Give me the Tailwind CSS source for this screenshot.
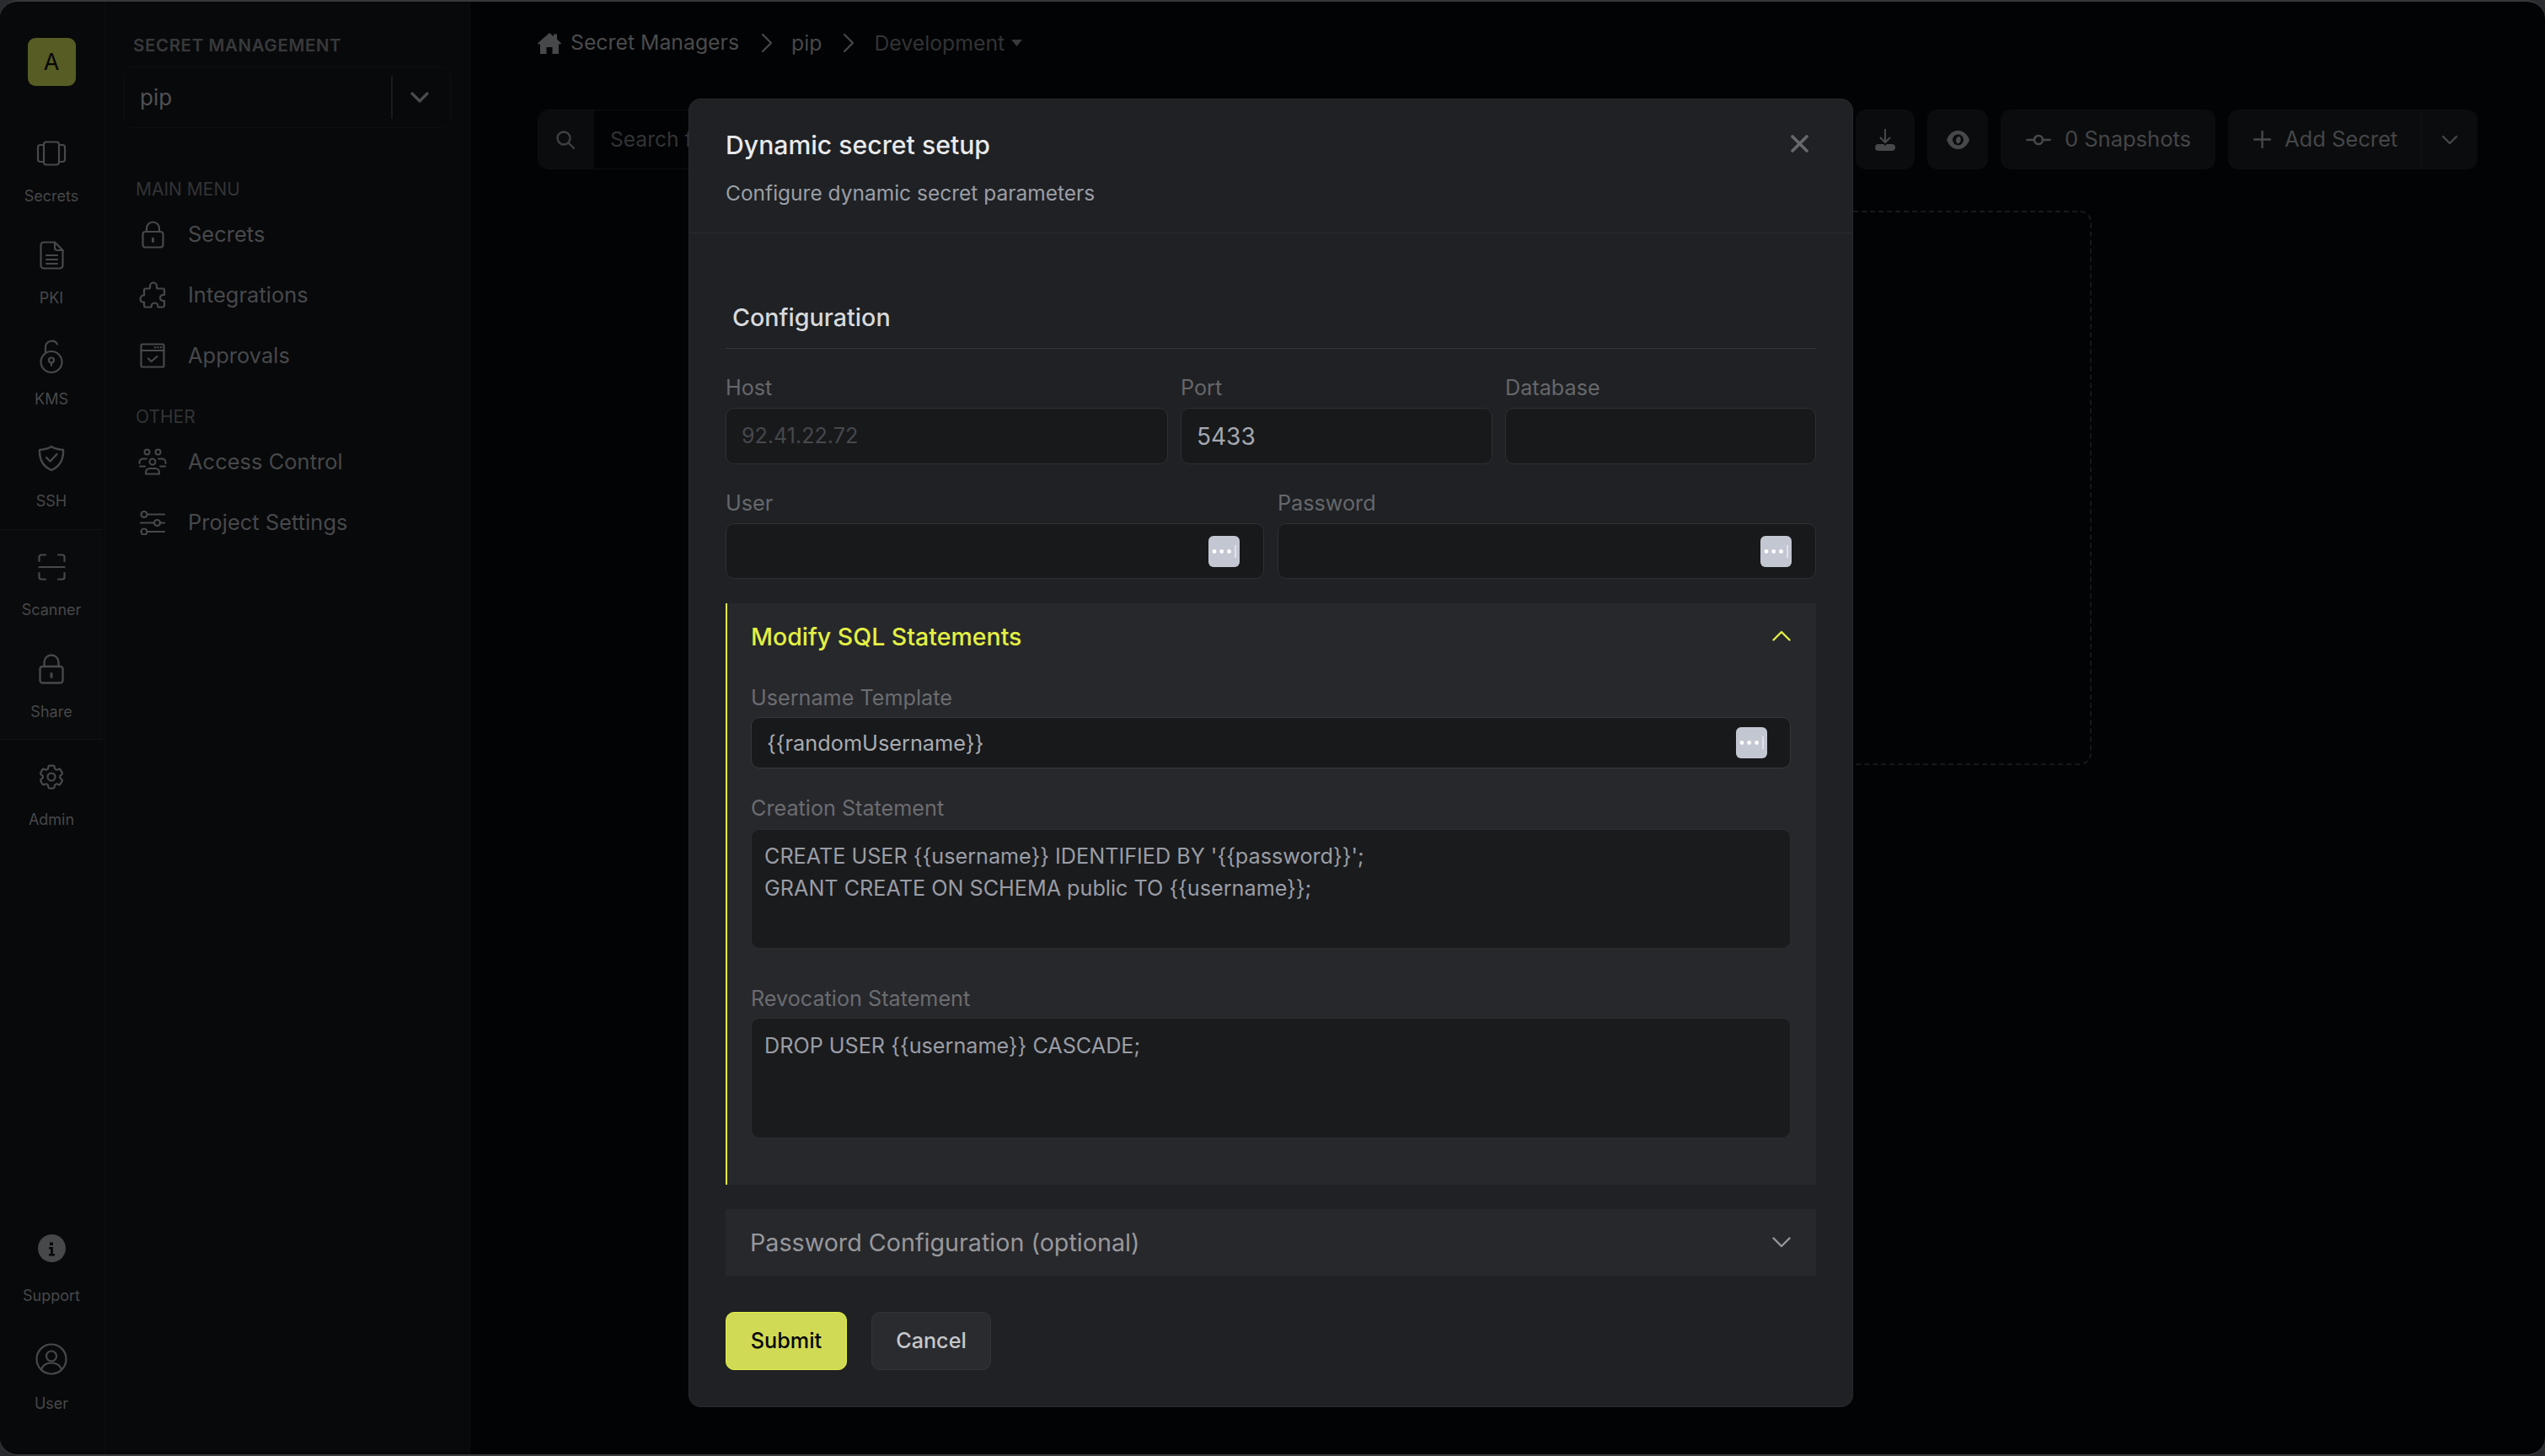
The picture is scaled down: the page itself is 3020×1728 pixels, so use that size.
<!doctype html>
<html lang="en">
<head>
    <meta charset="UTF-8" />
    <title>Dynamic secret setup</title>
    <script src="https://cdn.jsdelivr.net/npm/@tailwindcss/browser@4"></script>
</head>
<body class="bg-[#2a2b2e] font-[Inter,sans-serif]">

<div class="relative flex h-[1728px] w-[3020px] overflow-hidden rounded-[22px] border-y-2 border-[#37383c] bg-[#020304]">

    <!-- Icon rail -->
    <nav class="flex w-[125px] shrink-0 flex-col border-r border-[#0e0f11] bg-[#08090a] pr-[2px] text-[#47484a]">
        <div class="mx-auto mt-[43px] flex h-[57px] w-[57px] items-center justify-center rounded-[9px] bg-[#575c24] pt-[2px] text-[27px] text-[#050505]">A</div>

        <div class="mt-[58px] flex flex-col gap-[36.5px] pb-[22.5px]">
            <a class="flex flex-col items-center">
                <span class="flex h-[44px] items-center">
                    <svg width="36" height="30" viewBox="0 0 36 30" fill="none" stroke="currentColor" stroke-width="2.2" stroke-linecap="round" stroke-linejoin="round"><rect x="9" y="1.5" width="18" height="27" rx="3"/><path d="M9 5H5a3 3 0 0 0-3 3v14a3 3 0 0 0 3 3h4M27 5h4a3 3 0 0 1 3 3v14a3 3 0 0 1-3 3h-4"/></svg>
                </span>
                <span class="mt-[18px] text-[18px] leading-[22px]">Secrets</span>
            </a>
            <a class="flex flex-col items-center">
                <span class="flex h-[44px] items-center">
                    <svg width="29" height="34" viewBox="0 0 29 34" fill="none" stroke="currentColor" stroke-width="2.2" stroke-linecap="round" stroke-linejoin="round"><path d="M18 1.5H5A3.5 3.5 0 0 0 1.5 5v24A3.5 3.5 0 0 0 5 32.5h19a3.5 3.5 0 0 0 3.5-3.5V11z"/><path d="M18 1.5V8a3 3 0 0 0 3 3h6.5M8 17h13M8 22h13M8 27h13"/></svg>
                </span>
                <span class="mt-[18px] text-[18px] leading-[22px]">PKI</span>
            </a>
            <a class="flex flex-col items-center">
                <span class="flex h-[44px] items-center">
                    <svg width="28" height="41" viewBox="0 0 28 41" fill="none" stroke="currentColor" stroke-width="2.2" stroke-linecap="round" stroke-linejoin="round"><circle cx="14" cy="26.5" r="12.5"/><path d="M7 15V9a7.5 7.5 0 0 1 14-3.5"/><circle cx="14" cy="24.5" r="3"/><path d="M14 27.5V31"/></svg>
                </span>
                <span class="mt-[18px] text-[18px] leading-[22px]">KMS</span>
            </a>
            <a class="flex flex-col items-center">
                <span class="flex h-[44px] items-center">
                    <svg width="32" height="32" viewBox="0 0 32 32" fill="none" stroke="currentColor" stroke-width="2.4" stroke-linecap="round" stroke-linejoin="round"><path d="M16 2c4 2.5 8.5 3.5 14 4 .5 11-3 19-14 24C5 25 1.5 17 2 6c5.500-.5 10-1.5 14-4z"/><path d="M10 15l4.5 4.5L22.5 11"/></svg>
                </span>
                <span class="mt-[18px] text-[18px] leading-[22px]">SSH</span>
            </a>
        </div>

        <div class="flex flex-col gap-[37px] border-y border-[#121315] bg-[#0a0b0c] pt-[22px] pb-[21px]">
            <a class="flex flex-col items-center">
                <span class="flex h-[44px] items-center">
                    <svg width="33" height="32" viewBox="0 0 33 32" fill="none" stroke="currentColor" stroke-width="2.2" stroke-linecap="round" stroke-linejoin="round"><path d="M1.5 9V4A2.5 2.5 0 0 1 4 1.5h5M24 1.5h5A2.5 2.5 0 0 1 31.5 4v5M1.5 23v5A2.5 2.5 0 0 0 4 30.5h5M24 30.5h5a2.5 2.5 0 0 0 2.5-2.5v-5M1.5 16h30"/></svg>
                </span>
                <span class="mt-[18px] text-[18px] leading-[22px]">Scanner</span>
            </a>
            <a class="flex flex-col items-center">
                <span class="flex h-[44px] items-center">
                    <svg width="30" height="36" viewBox="0 0 30 36" fill="none" stroke="currentColor" stroke-width="2.4" stroke-linecap="round" stroke-linejoin="round"><rect x="1.5" y="15" width="27" height="19.5" rx="3"/><path d="M6.5 15v-5a8.5 8.5 0 0 1 17 0v5"/><path d="M15 23.5v4" stroke-width="3"/></svg>
                </span>
                <span class="mt-[18px] text-[18px] leading-[22px]">Share</span>
            </a>
        </div>

        <div class="pt-[22px]">
            <a class="flex flex-col items-center">
                <span class="flex h-[44px] items-center">
                    <svg width="36" height="36" viewBox="0 0 24 24" fill="none" stroke="currentColor" stroke-width="1.5" stroke-linecap="round" stroke-linejoin="round"><path d="M9.594 3.94c.09-.542.56-.94 1.11-.94h2.593c.55 0 1.02.398 1.11.94l.213 1.281c.063.374.313.686.645.87.074.04.147.083.22.127.324.196.72.257 1.075.124l1.217-.456a1.125 1.125 0 0 1 1.37.49l1.296 2.247a1.125 1.125 0 0 1-.26 1.431l-1.003.827c-.293.24-.438.613-.431.992a6.759 6.759 0 0 1 0 .255c-.007.378.138.75.43.99l1.005.828c.424.35.534.954.26 1.43l-1.298 2.247a1.125 1.125 0 0 1-1.369.491l-1.217-.456c-.355-.133-.75-.072-1.076.124a6.57 6.57 0 0 1-.22.128c-.331.183-.581.495-.644.869l-.213 1.28c-.09.543-.56.941-1.11.941h-2.594c-.55 0-1.02-.398-1.11-.94l-.213-1.281c-.062-.374-.312-.686-.644-.87a6.52 6.52 0 0 1-.22-.127c-.325-.196-.72-.257-1.076-.124l-1.217.456a1.125 1.125 0 0 1-1.369-.49l-1.297-2.247a1.125 1.125 0 0 1 .26-1.431l1.004-.827c.292-.24.437-.613.43-.992a6.932 6.932 0 0 1 0-.255c.007-.378-.138-.75-.43-.99l-1.004-.828a1.125 1.125 0 0 1-.26-1.43l1.297-2.247a1.125 1.125 0 0 1 1.37-.491l1.216.456c.356.133.751.072 1.076-.124.072-.044.146-.087.22-.128.332-.183.582-.495.644-.869l.214-1.281z"/><circle cx="12" cy="12" r="3"/></svg>
                </span>
                <span class="mt-[18px] text-[18px] leading-[22px]">Admin</span>
            </a>
        </div>

        <div class="mt-auto flex flex-col gap-[42px] pb-[49px]">
            <a class="flex flex-col items-center">
                <span class="flex h-[44px] items-center">
                    <svg width="33" height="33" viewBox="0 0 33 33"><circle cx="16.5" cy="16.5" r="16.5" fill="currentColor"/><path d="M14 9.5h4V13h-4zM13 15h5v8h2v2.500h-7V23h2v-5.500h-2z" fill="#08090a"/></svg>
                </span>
                <span class="mt-[24px] text-[18px] leading-[22px]">Support</span>
            </a>
            <a class="flex flex-col items-center">
                <span class="flex h-[44px] items-center">
                    <svg width="38" height="38" viewBox="0 0 38 38" fill="none" stroke="currentColor" stroke-width="2.2" stroke-linecap="round" stroke-linejoin="round"><circle cx="19" cy="19" r="17.5"/><circle cx="19" cy="15.5" r="6"/><path d="M7 31c2-5 6-7.500 12-7.500S29 26 31 31"/></svg>
                </span>
                <span class="mt-[20px] text-[18px] leading-[22px]">User</span>
            </a>
        </div>
    </nav>

    <!-- Project menu -->
    <aside class="w-[433px] shrink-0 border-r border-[#0e0f11] bg-[#08090b]">
        <div class="mt-[39px] ml-[33px] text-[20.5px] leading-[26px] font-semibold tracking-[0.6px] text-[#38393b]">SECRET MANAGEMENT</div>
        <div class="mt-[12px] ml-[22px] flex h-[73px] w-[388px] items-center rounded-[10px] border border-[#0e0f11] pl-[18px]">
            <span class="flex-1 text-[26px] text-[#505153]">pip</span>
            <span class="h-[51px] w-[2px] bg-[#1a1b1d]"></span>
            <span class="flex w-[68px] items-center justify-center pr-[4px]">
                <svg width="22" height="13" viewBox="0 0 22 13" fill="none" stroke="#4a4b4d" stroke-width="3.2" stroke-linecap="round" stroke-linejoin="round"><path d="M2 2l9 9 9-9"/></svg>
            </span>
        </div>

        <div class="mt-[60px] ml-[36px] text-[21px] leading-[26px] text-[#323335]">MAIN MENU</div>
        <div class="mt-[4px] text-[#47484a]">
            <a class="flex h-[72px] items-center">
                <span class="flex w-[98px] justify-center pl-[14px]">
                    <svg width="27" height="33" viewBox="0 0 27 33" fill="none" stroke="currentColor" stroke-width="2.2" stroke-linecap="round" stroke-linejoin="round"><rect x="1.5" y="13" width="24" height="18.5" rx="3"/><path d="M6 13V9a7.5 7.5 0 0 1 15 0v4"/><path d="M13.5 21v3.5" stroke-width="3"/></svg>
                </span>
                <span class="text-[25.5px]">Secrets</span>
            </a>
            <a class="flex h-[72px] items-center">
                <span class="flex w-[98px] justify-center pl-[14px]">
                    <svg width="33" height="32" viewBox="0 0 33 32" fill="none" stroke="currentColor" stroke-width="2.2" stroke-linecap="round" stroke-linejoin="round"><path d="M13 7V5.500a4 4 0 0 1 8 0V7c0 1 .8 1.500 1.500 1.500H28a2 2 0 0 1 2 2V16c-3.500-.5-5 1.500-5 3.500s1.500 4 5 3.500v6a2 2 0 0 1-2 1.500h-5.500c0-3.500-2-5-4-5s-4 1.500-4 5H8a2 2 0 0 1-2-2v-4c-3 .5-4.500-1.500-4.500-3.500S3 16 6 16.500v-6a2 2 0 0 1 2-2h3.500C12.200 8.500 13 8 13 7z"/></svg>
                </span>
                <span class="text-[25.5px]">Integrations</span>
            </a>
            <a class="flex h-[72px] items-center">
                <span class="flex w-[98px] justify-center pl-[14px]">
                    <svg width="30" height="30" viewBox="0 0 30 30" fill="none" stroke="currentColor" stroke-width="2.2" stroke-linecap="round" stroke-linejoin="round"><rect x="1.5" y="1.5" width="27" height="27" rx="1.5"/><path d="M1.500 9h27M10 18.500l3.500 3.500 7-6"/><path d="M18 5.200h.1M21.500 5.200h.1M25 5.200h.1" stroke-width="2.5"/></svg>
                </span>
                <span class="text-[25.5px]">Approvals</span>
            </a>
        </div>

        <div class="mt-[24px] ml-[36px] text-[21px] leading-[26px] text-[#323335]">OTHER</div>
        <div class="mt-[4px] text-[#47484a]">
            <a class="flex h-[72px] items-center">
                <span class="flex w-[98px] justify-center pl-[14px]">
                    <svg width="34" height="32" viewBox="0 0 34 32" fill="none" stroke="currentColor" stroke-width="2" stroke-linecap="round" stroke-linejoin="round"><circle cx="10.500" cy="4.500" r="3"/><circle cx="23.500" cy="4.500" r="3"/><circle cx="17" cy="16" r="3.500"/><path d="M1.500 18v-1.500a4 4 0 0 1 4-4H10M32.500 18v-1.500a4 4 0 0 0-4-4H24M9 30.500v-2a4.500 4.500 0 0 1 4.500-4.500h7a4.500 4.500 0 0 1 4.500 4.500v2zM2 21.500h6M26 21.500h6"/></svg>
                </span>
                <span class="text-[25.5px]">Access Control</span>
            </a>
            <a class="flex h-[72px] items-center">
                <span class="flex w-[98px] justify-center pl-[14px]">
                    <svg width="30" height="29" viewBox="0 0 30 29" fill="none" stroke="currentColor" stroke-width="2.2" stroke-linecap="round"><path d="M9.500 4.500H29M1 14.500h16M24 14.500h5M9.500 25H29"/><circle cx="5" cy="4.500" r="3.500"/><circle cx="20.500" cy="14.500" r="3.500"/><circle cx="5" cy="25" r="3.500"/></svg>
                </span>
                <span class="text-[25.5px]">Project Settings</span>
            </a>
        </div>
    </aside>

    <!-- Page behind the modal -->
    <main class="flex min-w-0 flex-1 flex-col px-[80px]">
        <div class="mt-[30px] flex h-[38px] items-center text-[24.8px]">
            <svg width="28" height="25" viewBox="0 0 28 25" fill="#47484a"><path d="M14 0l5 4.300V1.500h4v6.300l5 4.400-1.500 1.800-1.500-1.300V25h-7.500v-8h-7v8H3V12.700L1.500 14 0 12.200z"/></svg>
            <span class="ml-[11px] text-[#4a4b4d]">Secret Managers</span>
            <svg class="mr-[22px] ml-[26px]" width="14" height="24" viewBox="0 0 14 24" fill="none" stroke="#47484a" stroke-width="2.2" stroke-linecap="round" stroke-linejoin="round"><path d="M2 2l10 10L2 22"/></svg>
            <span class="mt-[2px] text-[#47484a]">pip</span>
            <svg class="mr-[23px] ml-[25px]" width="14" height="24" viewBox="0 0 14 24" fill="none" stroke="#47484a" stroke-width="2.2" stroke-linecap="round" stroke-linejoin="round"><path d="M2 2l10 10L2 22"/></svg>
            <span class="mt-[2px] text-[#323335]">Development</span>
            <svg class="ml-[8px]" width="13" height="8" viewBox="0 0 13 8" fill="#38393b"><path d="M0 0h13L6.500 8z"/></svg>
        </div>

        <div class="mt-[60px] flex h-[71px] items-stretch gap-[15px]">
            <div class="flex flex-1 overflow-hidden rounded-[12px] border border-[#0e0f11]">
                <span class="flex w-[66px] items-center justify-center bg-[#0b0c0d] pr-[2px]">
                    <svg width="24" height="24" viewBox="0 0 24 24" fill="none" stroke="#3f4042" stroke-width="2.4" stroke-linecap="round"><circle cx="10" cy="10" r="7.5"/><path d="M16 16l6 6"/></svg>
                </span>
                <span class="flex items-center pl-[19px] text-[24.6px] text-[#323335]">Search f</span>
            </div>
            <div class="flex w-[70px] items-center justify-center rounded-[12px] bg-[#0b0c0d]">
                <svg width="26" height="26" viewBox="0 0 26 26" fill="#47484a"><path d="M12 0h2v13.500l4.300-4.300 1.500 1.500-6.800 6.800-6.800-6.800 1.500-1.500L12 13.500z"/><path d="M5 18h6l2 2 2-2h6a4 4 0 0 1 0 8H5a4 4 0 0 1 0-8z"/></svg>
            </div>
            <div class="flex w-[72px] items-center justify-center rounded-[12px] bg-[#0b0c0d]">
                <svg width="27" height="22" viewBox="0 0 27 22"><path d="M13.500 0C21 0 25.500 6.500 27 11c-1.500 4.500-6 11-13.500 11S1.500 15.500 0 11C1.500 6.500 6 0 13.500 0z" fill="#47484a"/><circle cx="13.500" cy="11" r="6.500" fill="#0b0c0d"/><path d="M15 7a4.500 4.500 0 0 0-1.500 8.500 5 5 0 0 0 1.500-8.500z" fill="#47484a"/></svg>
            </div>
            <div class="flex w-[255px] items-center rounded-[12px] bg-[#0b0c0d] pl-[30px] text-[25.5px] text-[#454648]">
                <svg width="30" height="14" viewBox="0 0 30 14" fill="none" stroke="#47484a" stroke-width="2.6" stroke-linecap="round"><circle cx="15" cy="7" r="5"/><path d="M1.500 7H10M20 7h8.500"/></svg>
                <span class="ml-[16px]">0 Snapshots</span>
            </div>
            <div class="flex w-[296px] rounded-[12px] bg-[#0b0c0d] text-[25.5px] text-[#454648]">
                <span class="flex w-[229px] items-center pl-[30px]">
                    <svg width="21" height="21" viewBox="0 0 21 21" fill="none" stroke="#47484a" stroke-width="2.4" stroke-linecap="round"><path d="M10.500 1v19M1 10.500h19"/></svg>
                    <span class="ml-[16px]">Add Secret</span>
                </span>
                <span class="flex flex-1 items-center justify-center border-l border-[#111214]">
                    <svg width="20" height="12" viewBox="0 0 20 12" fill="none" stroke="#47484a" stroke-width="2.4" stroke-linecap="round" stroke-linejoin="round"><path d="M2 2l8 8 8-8"/></svg>
                </span>
            </div>
        </div>

        <div class="mx-auto mt-[49px] h-[658px] w-[1386px] rounded-[14px] border-2 border-dashed border-[#17181a]"></div>
    </main>

    <!-- Modal -->
    <div class="absolute top-[115px] left-[817px] w-[1382px] rounded-[14px] border border-[#292b2e] bg-[#1f2124]">
        <div class="relative border-b border-[#2a2c2f] px-[43px] pt-[34px] pb-[29px]">
            <h2 class="text-[30.2px] leading-[40px] font-medium text-[#e8e9eb]">Dynamic secret setup</h2>
            <p class="mt-[19px] text-[24.5px] leading-[36px] text-[#9b9ea6]">Configure dynamic secret parameters</p>
            <button class="absolute top-[42px] right-[52px]">
                <svg width="21" height="21" viewBox="0 0 21 21" fill="none" stroke="#67686c" stroke-width="3.6" stroke-linecap="round"><path d="M2 2l17 17M19 2L2 19"/></svg>
            </button>
        </div>

        <div class="px-[43px] pt-[80px] pb-[43px]">
            <div class="border-b border-[#33353a] pb-[16px] pl-[8px] text-[28.7px] leading-[40px] font-medium text-[#d8d9dc]">Configuration</div>

            <div class="mt-[31px] flex gap-[15px]">
                <div class="w-[525px]">
                    <div class="mb-[9px] text-[25.2px] leading-[30px] text-[#66676b]">Host</div>
                    <div class="flex h-[67px] items-center rounded-[10px] border border-[#2e3033] bg-[#18191b] pl-[18px] text-[25.1px] text-[#46484c]">92.41.22.72</div>
                </div>
                <div class="w-[370px]">
                    <div class="mb-[9px] text-[25.2px] leading-[30px] text-[#66676b]">Port</div>
                    <div class="flex h-[67px] items-center rounded-[10px] border border-[#2e3033] bg-[#18191b] pl-[18px] text-[28px] text-[#a4a8b0]">5433</div>
                </div>
                <div class="flex-1">
                    <div class="mb-[9px] text-[25.2px] leading-[30px] text-[#66676b]">Database</div>
                    <div class="h-[67px] rounded-[10px] border border-[#2e3033] bg-[#18191b]"></div>
                </div>
            </div>

            <div class="mt-[31px] flex gap-[16px]">
                <div class="w-[639px]">
                    <div class="mb-[9px] text-[25.2px] leading-[30px] text-[#66676b]">User</div>
                    <div class="flex h-[66px] items-center justify-end rounded-[10px] border border-[#2e3033] bg-[#18191b] pr-[28px]">
                        <svg width="37" height="37" viewBox="0 0 37 37"><rect width="37" height="37" rx="6" fill="#c3c7d2"/><circle cx="7" cy="18.5" r="2.4" fill="#fff"/><circle cx="15.7" cy="18.5" r="2.4" fill="#fff"/><circle cx="24.5" cy="18.5" r="2.4" fill="#fff"/><path d="M32 11v15" stroke="#fff" stroke-width="1"/></svg>
                    </div>
                </div>
                <div class="flex-1">
                    <div class="mb-[9px] text-[25.2px] leading-[30px] text-[#66676b]">Password</div>
                    <div class="flex h-[66px] items-center justify-end rounded-[10px] border border-[#2e3033] bg-[#18191b] pr-[28px]">
                        <svg width="37" height="37" viewBox="0 0 37 37"><rect width="37" height="37" rx="6" fill="#c3c7d2"/><circle cx="7" cy="18.5" r="2.4" fill="#fff"/><circle cx="15.7" cy="18.5" r="2.4" fill="#fff"/><circle cx="24.5" cy="18.5" r="2.4" fill="#fff"/><path d="M32 11v15" stroke="#fff" stroke-width="1"/></svg>
                    </div>
                </div>
            </div>

            <!-- SQL statements -->
            <section class="mt-[29px] border-l-2 border-[#e3f044] bg-[#27282c] pt-[20px] pr-[30px] pb-[55px] pl-[28px]">
                <div class="flex items-center justify-between">
                    <span class="text-[28.5px] leading-[40px] font-medium text-[#e3f044]">Modify SQL Statements</span>
                    <svg class="mb-[3px]" width="22" height="13" viewBox="0 0 22 13" fill="none" stroke="#e3f044" stroke-width="2.4" stroke-linecap="round" stroke-linejoin="round"><path d="M1.500 11.500L11 2l9.500 9.500"/></svg>
                </div>

                <div class="mt-[37px] mb-[8px] text-[25.2px] leading-[30px] text-[#6b6c70]">Username Template</div>
                <div class="flex h-[61px] items-center justify-between rounded-[10px] border border-[#36383c] bg-[#18191b] pr-[27px] pl-[18px] text-[25.3px] text-[#a9abb0]">
                    <span>{{randomUsername}}</span>
                    <svg width="37" height="37" viewBox="0 0 37 37"><rect width="37" height="37" rx="6" fill="#c3c7d2"/><circle cx="7" cy="18.5" r="2.4" fill="#fff"/><circle cx="15.7" cy="18.5" r="2.4" fill="#fff"/><circle cx="24.5" cy="18.5" r="2.4" fill="#fff"/><path d="M32 11v15" stroke="#fff" stroke-width="1"/></svg>
                </div>

                <div class="mt-[32px] mb-[10px] text-[25.2px] leading-[30px] text-[#6b6c70]">Creation Statement</div>
                <div class="h-[142px] rounded-[10px] border border-[#2b2c30] bg-[#1a1b1d] px-[15px] pt-[12px] text-[25.2px] leading-[38px] text-[#9a9da6]">CREATE USER {{username}} IDENTIFIED BY '{{password}}';<br>GRANT CREATE ON SCHEMA public TO {{username}};</div>

                <div class="mt-[44px] mb-[8px] text-[25.2px] leading-[30px] text-[#6b6c70]">Revocation Statement</div>
                <div class="h-[143px] rounded-[10px] border border-[#2b2c30] bg-[#1a1b1d] px-[15px] pt-[13px] text-[25.2px] leading-[38px] text-[#9a9da6]">DROP USER {{username}} CASCADE;</div>
            </section>

            <div class="mt-[29px] flex h-[79px] items-center justify-between bg-[#27282c] px-[29px]">
                <span class="text-[28.7px] text-[#97989c]">Password Configuration (optional)</span>
                <svg class="mr-[1px]" width="22" height="13" viewBox="0 0 22 13" fill="none" stroke="#97989c" stroke-width="2.4" stroke-linecap="round" stroke-linejoin="round"><path d="M1.500 1.500L11 11l9.500-9.500"/></svg>
            </div>

            <div class="mt-[43px] flex gap-[29px]">
                <button class="h-[69px] w-[144px] rounded-[10px] border border-[#e3f044] bg-[#d1da55] text-[25.2px] font-medium text-[#050505]">Submit</button>
                <button class="h-[69px] w-[142px] rounded-[10px] border border-[#333438] bg-[#2a2b2f] text-[25.2px] font-medium text-[#c6c7c9]">Cancel</button>
            </div>
        </div>
    </div>
</div>

</body>
</html>
